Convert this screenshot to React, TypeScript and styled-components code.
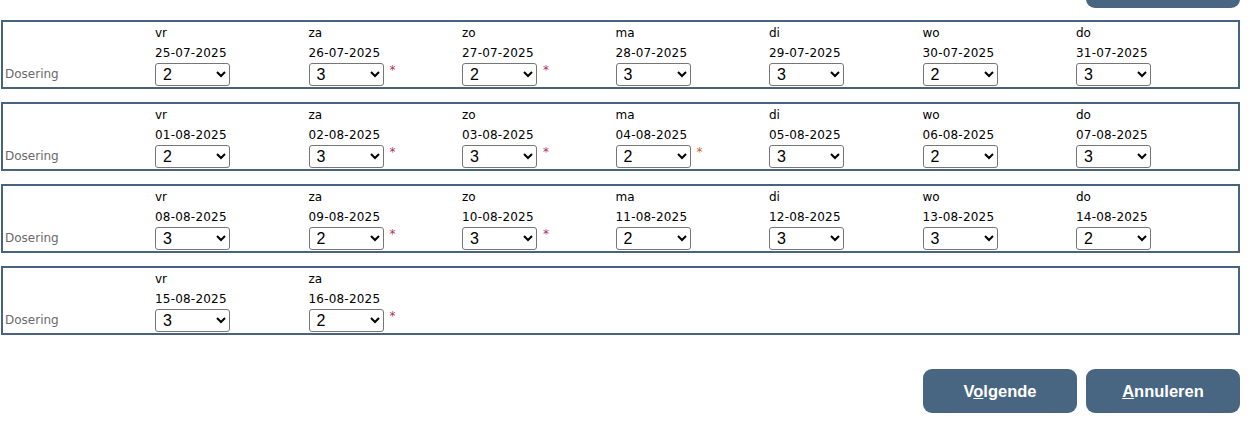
import React from "react";
import styled, { createGlobalStyle } from "styled-components";

const GlobalStyle = createGlobalStyle`
  html, body {
    margin: 0;
    padding: 0;
    background: #ffffff;
  }
  body {
    font-family: "DejaVu Sans", Verdana, sans-serif;
    font-size: 12px;
    color: #000;
    overflow: hidden;
  }
`;

const Page = styled.div`
  width: 1239px;
  margin-left: 1px;
  display: flex;
  flex-direction: column;
`;

const TopBar = styled.div`
  display: flex;
  justify-content: flex-end;
  margin-top: -36px;
  margin-bottom: 12px;
`;

const Panels = styled.div`
  display: flex;
  flex-direction: column;
  gap: 13px;
`;

const Panel = styled.div`
  display: flex;
  border: 2px solid #48637e;
  height: 65px;
`;

const LabelCell = styled.div`
  width: 152px;
  flex: none;
  align-self: flex-end;
  padding: 0 0 1px 2px;
  box-sizing: border-box;
  line-height: 23px;
  color: #6a6a6a;
`;

const DayCell = styled.div`
  width: 153.5px;
  flex: none;
  display: flex;
  flex-direction: column;
`;

const DayName = styled.div`
  height: 22px;
  line-height: 22px;
`;

const DateText = styled.div`
  height: 18px;
  line-height: 19px;
  letter-spacing: 0.2px;
`;

const InputRow = styled.div`
  display: flex;
  align-items: flex-start;
  padding-top: 1px;
`;

const DoseSelect = styled.select`
  width: 75px;
  height: 23px;
  margin: 0;
  padding: 0 0 0 3px;
  font-family: "Liberation Sans", Arial, sans-serif;
  font-size: 16px;
  color: #000;
  background: #fff;
  border: 1px solid #767676;
  border-radius: 3px;
`;

const Star = styled.span<{ $tone: "red" | "orange" }>`
  margin-left: 6px;
  font-size: 12px;
  line-height: 14px;
  color: ${(p) => (p.$tone === "orange" ? "#c8641c" : "#b0306a")};
`;

const ButtonRow = styled.div`
  display: flex;
  justify-content: flex-end;
  gap: 9px;
  margin-top: 34px;
`;

const ActionButton = styled.button`
  width: 154px;
  height: 44px;
  border: none;
  border-radius: 9px;
  background: #486581;
  color: #fff;
  font-family: "Liberation Sans", Arial, sans-serif;
  font-weight: bold;
  font-size: 16.5px;
  cursor: pointer;
  padding: 0;
`;

type Day = { name: string; date: string; dose: string; star?: "red" | "orange" };

const weeks: Day[][] = [
  [
    { name: "vr", date: "25-07-2025", dose: "2" },
    { name: "za", date: "26-07-2025", dose: "3", star: "red" },
    { name: "zo", date: "27-07-2025", dose: "2", star: "red" },
    { name: "ma", date: "28-07-2025", dose: "3" },
    { name: "di", date: "29-07-2025", dose: "3" },
    { name: "wo", date: "30-07-2025", dose: "2" },
    { name: "do", date: "31-07-2025", dose: "3" },
  ],
  [
    { name: "vr", date: "01-08-2025", dose: "2" },
    { name: "za", date: "02-08-2025", dose: "3", star: "red" },
    { name: "zo", date: "03-08-2025", dose: "3", star: "red" },
    { name: "ma", date: "04-08-2025", dose: "2", star: "orange" },
    { name: "di", date: "05-08-2025", dose: "3" },
    { name: "wo", date: "06-08-2025", dose: "2" },
    { name: "do", date: "07-08-2025", dose: "3" },
  ],
  [
    { name: "vr", date: "08-08-2025", dose: "3" },
    { name: "za", date: "09-08-2025", dose: "2", star: "red" },
    { name: "zo", date: "10-08-2025", dose: "3", star: "red" },
    { name: "ma", date: "11-08-2025", dose: "2" },
    { name: "di", date: "12-08-2025", dose: "3" },
    { name: "wo", date: "13-08-2025", dose: "3" },
    { name: "do", date: "14-08-2025", dose: "2" },
  ],
  [
    { name: "vr", date: "15-08-2025", dose: "3" },
    { name: "za", date: "16-08-2025", dose: "2", star: "red" },
  ],
];

export default function App() {
  return (
    <>
      <GlobalStyle />
      <Page>
        <TopBar>
          {/* button of the row above, scrolled mostly out of view */}
          <ActionButton aria-label="Vorige" />
        </TopBar>
        <Panels>
          {weeks.map((week, wi) => (
            <Panel key={wi}>
              <LabelCell>Dosering</LabelCell>
              {week.map((d) => (
                <DayCell key={d.date}>
                  <DayName>{d.name}</DayName>
                  <DateText>{d.date}</DateText>
                  <InputRow>
                    <DoseSelect defaultValue={d.dose}>
                      <option value="1">1</option>
                      <option value="2">2</option>
                      <option value="3">3</option>
                    </DoseSelect>
                    {d.star && <Star $tone={d.star}>*</Star>}
                  </InputRow>
                </DayCell>
              ))}
            </Panel>
          ))}
        </Panels>
        <ButtonRow>
          <ActionButton>
            V<u>o</u>lgende
          </ActionButton>
          <ActionButton>
            <u>A</u>nnuleren
          </ActionButton>
        </ButtonRow>
      </Page>
    </>
  );
}
